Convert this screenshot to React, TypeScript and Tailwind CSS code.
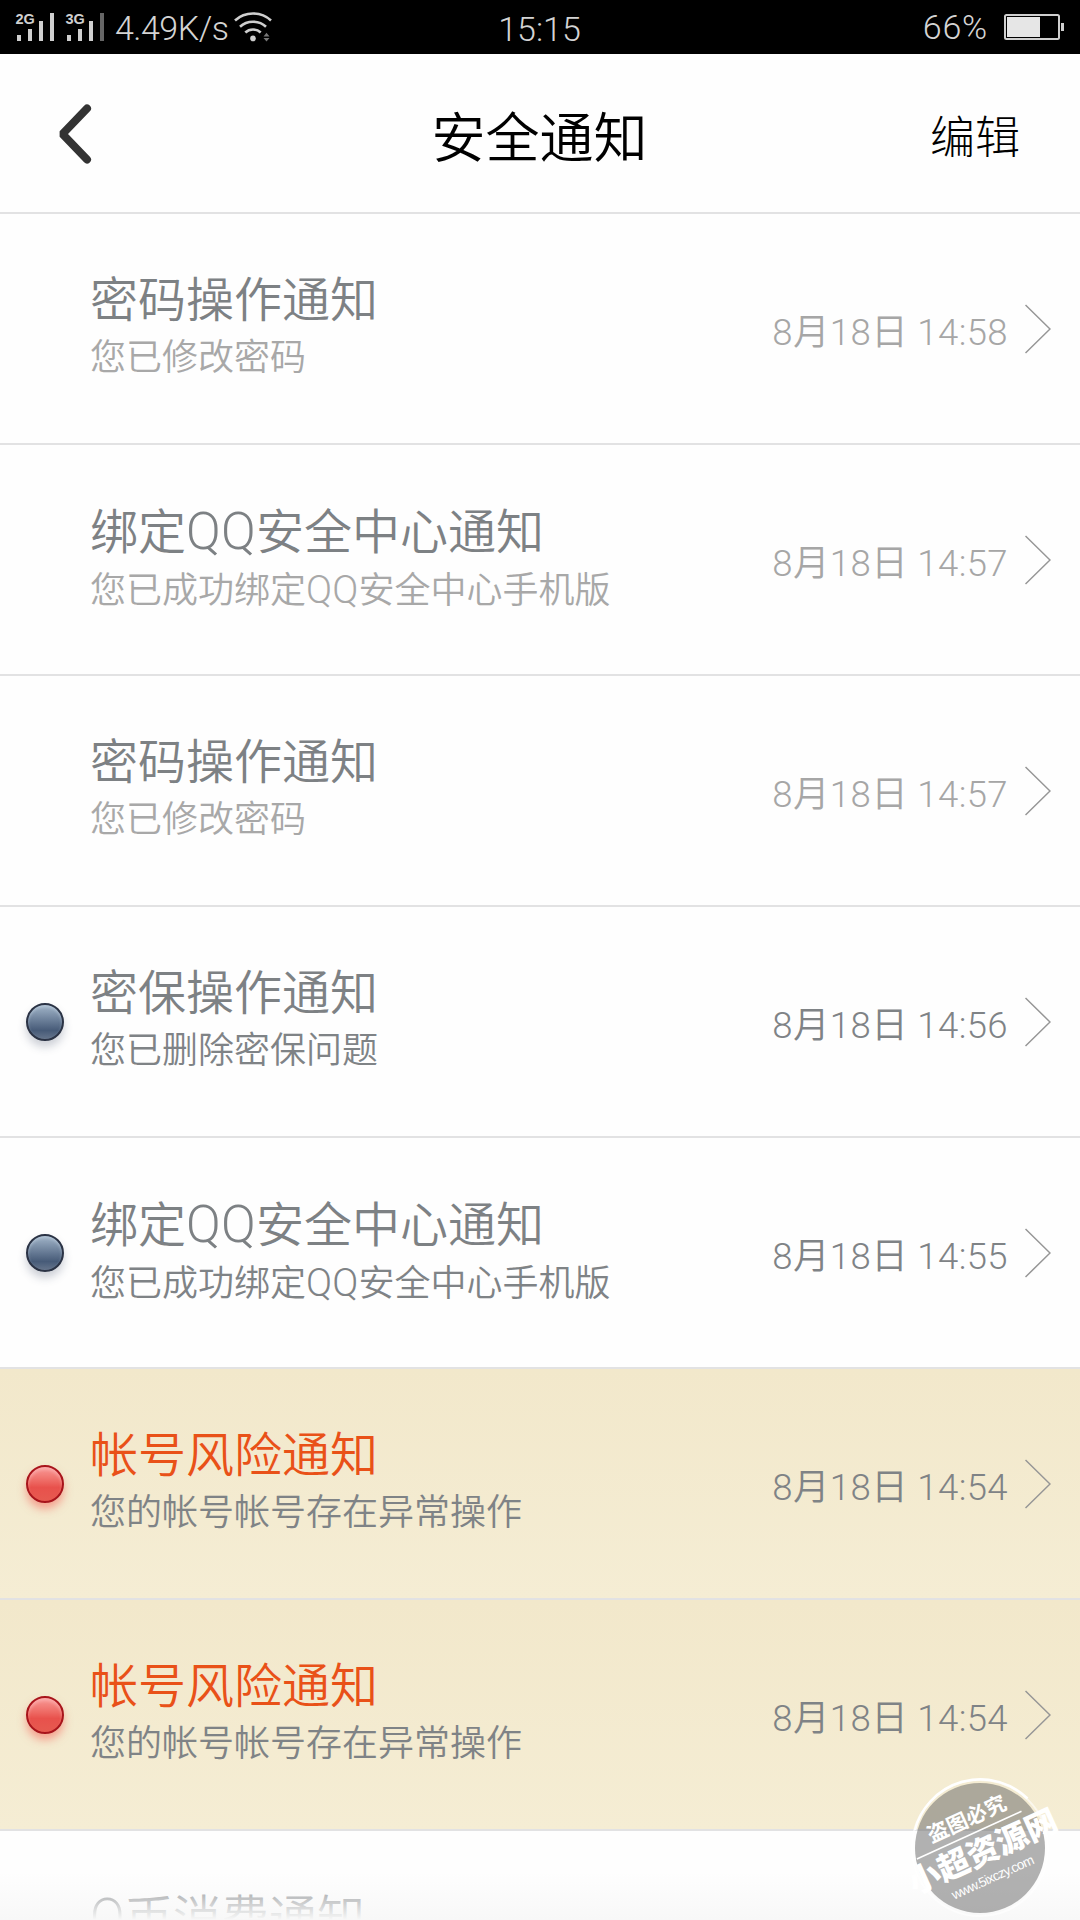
import clsx from "clsx";

type Level = "read" | "unread" | "risk";

interface Notice {
  title: string;
  text: string;
  date: string;
  level: Level;
}

const notices: Notice[] = [
  { title: "密码操作通知", text: "您已修改密码", date: "8月18日 14:58", level: "read" },
  { title: "绑定QQ安全中心通知", text: "您已成功绑定QQ安全中心手机版", date: "8月18日 14:57", level: "read" },
  { title: "密码操作通知", text: "您已修改密码", date: "8月18日 14:57", level: "read" },
  { title: "密保操作通知", text: "您已删除密保问题", date: "8月18日 14:56", level: "unread" },
  { title: "绑定QQ安全中心通知", text: "您已成功绑定QQ安全中心手机版", date: "8月18日 14:55", level: "unread" },
  { title: "帐号风险通知", text: "您的帐号帐号存在异常操作", date: "8月18日 14:54", level: "risk" },
  { title: "帐号风险通知", text: "您的帐号帐号存在异常操作", date: "8月18日 14:54", level: "risk" },
  { title: "Q币消费通知", text: "", date: "", level: "read" },
];

function Signal({ label, weak }: { label: string; weak?: boolean }) {
  return (
    <svg width="40" height="30" viewBox="0 0 40 30" fill="#cfcfcf">
      <text x="0.5" y="11.5" fontSize="14.5" fontWeight="700" fontFamily="Liberation Sans, sans-serif">
        {label}
      </text>
      <rect x="2" y="23" width="4" height="6" />
      <rect x="13" y="17" width="4" height="12" />
      <rect x="24" y="9" width="4" height="20" />
      <rect x="35" y="1" width="4" height="28" fill={weak ? "#666666" : "#cfcfcf"} />
    </svg>
  );
}

function Wifi() {
  return (
    <svg width="38" height="30" viewBox="0 0 38 30" fill="none" stroke="#cfcfcf" strokeWidth="2.6">
      <path d="M1 8.5C11 -0.8 27 -0.8 37 8.5" />
      <path d="M6 14.8C13 8 25 8 32 14.8" />
      <path d="M11.3 20.5C15.5 16.4 22.5 16.4 26.7 20.5" />
      <circle cx="19" cy="26.4" r="2.8" fill="#cfcfcf" stroke="none" />
      <path d="M29.5 24.5L32.5 20.8L35.5 24.5ZM29.5 26L32.5 29.5L35.5 26Z" fill="#777777" stroke="none" />
    </svg>
  );
}

function StatusBar() {
  return (
    <div className="grid h-[54px] shrink-0 grid-cols-3 items-center bg-black pr-4 pl-[15px] text-[#d4d4d4]">
      <div className="flex items-center">
        <Signal label="2G" />
        <div className="ml-2.5 flex">
          <Signal label="3G" weak />
        </div>
        <span className="ml-[10px] w-[119px] pt-[3px] text-[34px] leading-[51px] tracking-[-0.5px]">4.49K/s</span>
        <Wifi />
      </div>
      <span className="pt-[5px] text-center text-[34px] leading-[49px]">15:15</span>
      <div className="flex items-center justify-end">
        <span className="mr-4 text-[34px] leading-[54px] tracking-[0.8px]">66%</span>
        <svg width="60" height="26" viewBox="0 0 60 26" fill="none">
          <rect x="1" y="1" width="54" height="24" rx="1.5" stroke="#cfcfcf" strokeWidth="2" />
          <rect x="3" y="3" width="33" height="20" fill="#e6e6e6" />
          <rect x="57" y="9" width="3" height="8" fill="#cfcfcf" />
        </svg>
      </div>
    </div>
  );
}

function Header() {
  return (
    <div className="grid h-[158px] shrink-0 grid-cols-3 items-center pr-[60px] pl-[58px] text-black">
      <svg className="mt-0.5" width="34" height="62" viewBox="0 0 34 62" fill="none">
        <path d="M29 5.5L4.5 31L29 56.5" stroke="#333333" strokeWidth="8" strokeLinecap="round" strokeLinejoin="bevel" />
      </svg>
      <h1 className="pt-[13px] pl-px text-center text-[54px] leading-none font-[350]">安全通知</h1>
      <button className="justify-self-end pt-[11px] text-[45px] leading-none">编辑</button>
    </div>
  );
}

function Dot({ risk }: { risk: boolean }) {
  return (
    <span
      className={clsx(
        "size-[38px] rounded-full border-2",
        risk
          ? "border-[#a8141b] bg-linear-to-b from-[#f89a98] via-[#e8514c] via-60% to-[#e65a50] shadow-[0_6px_8px_rgba(245,90,80,0.5),inset_0_3px_3px_rgba(255,190,190,0.5)]"
          : "border-[#2b3345] bg-linear-to-b from-[#a3b6ca] via-[#475b78] via-75% to-[#66758c] shadow-[0_6px_8px_rgba(60,70,100,0.25),inset_0_2px_3px_rgba(200,215,230,0.5)]",
      )}
    />
  );
}

// Roboto's Q is small next to the CJK text, so it is set slightly larger
function Mixed({ children }: { children: string }) {
  return children.split(/(Q+)/).map((part, i) =>
    part.startsWith("Q") ? (
      <span key={i} className="text-[1.07em] tracking-[0.005em]">
        {part}
      </span>
    ) : (
      part
    ),
  );
}

function Row({ title, text, date, level }: Notice) {
  return (
    <li
      className={clsx(
        "flex h-[231px] shrink-0 items-center border-t-2 border-[#e2e2e3] pr-[29px] font-[350]",
        level === "risk" && "bg-linear-to-b from-[#f2e8cb] to-[#f5edd4]",
      )}
    >
      <div className="flex w-[90px] justify-center">{level !== "read" && <Dot risk={level === "risk"} />}</div>
      <div className="flex h-[103px] flex-1 flex-col gap-[15px]">
        <h2 className={clsx("text-[48px] leading-[48px]", level === "risk" ? "text-[#e95118]" : "text-[#7d8184]")}>
          <Mixed>{title}</Mixed>
        </h2>
        <p className={clsx("text-[36px] leading-[36px]", level === "read" ? "text-[#a8a8a8]" : "text-[#7f8386]")}>
          <Mixed>{text}</Mixed>
        </p>
      </div>
      {date && (
        <>
          <span
            className={clsx(
              "pt-[10px] text-[36.5px] leading-none tracking-[0.4px]",
              level === "read" ? "text-[#a6a6a6]" : "text-[#7f8386]",
            )}
          >
            {date}
          </span>
          <svg className="ml-[17px]" width="26" height="50" viewBox="0 0 26 50" fill="none">
            <path d="M0.5 1L25 25L0.5 49" stroke="#969696" strokeWidth="1.5" />
          </svg>
        </>
      )}
    </li>
  );
}

function Watermark() {
  return (
    <svg className="absolute right-0 bottom-0" width="200" height="160" viewBox="0 0 200 160">
      <circle cx="100" cy="88" r="68" fill="none" stroke="#ffffff" strokeOpacity="0.6" strokeWidth="2" />
      <path d="M35 70A67.5 67.5 0 0 1 147.5 38.5" fill="none" stroke="#ffffff" strokeWidth="2.5" />
      <circle cx="100" cy="88" r="65" fill="#646464" fillOpacity="0.5" />
      <g fill="#ffffff" fontFamily="'Noto Sans CJK SC', sans-serif" transform="rotate(-24.5 100 88)">
        <rect x="38" y="71" width="115" height="1.6" />
        <text x="58" y="63.5" fontSize="21" fontWeight="700">
          盗图必究
        </text>
        <text x="21" y="104" fontSize="32" fontWeight="900">
          小超资源网
        </text>
        <text x="55" y="124.5" fontSize="13.5" fontFamily="Liberation Sans, sans-serif" textLength="89">
          www.5ixczy.com
        </text>
      </g>
    </svg>
  );
}

export default function App() {
  return (
    <div className="relative flex h-[1920px] w-[1080px] flex-col overflow-hidden bg-[#fefefe] font-['Roboto','Noto_Sans_CJK_SC',sans-serif] font-light">
      <StatusBar />
      <Header />
      <ul className="flex flex-col">
        {notices.map((notice, i) => (
          <Row key={i} {...notice} />
        ))}
      </ul>
      <div className="absolute inset-x-0 bottom-0 h-12 bg-linear-to-b from-[#f8f8f8]/0 to-[#f8f8f8]" />
      <Watermark />
    </div>
  );
}
